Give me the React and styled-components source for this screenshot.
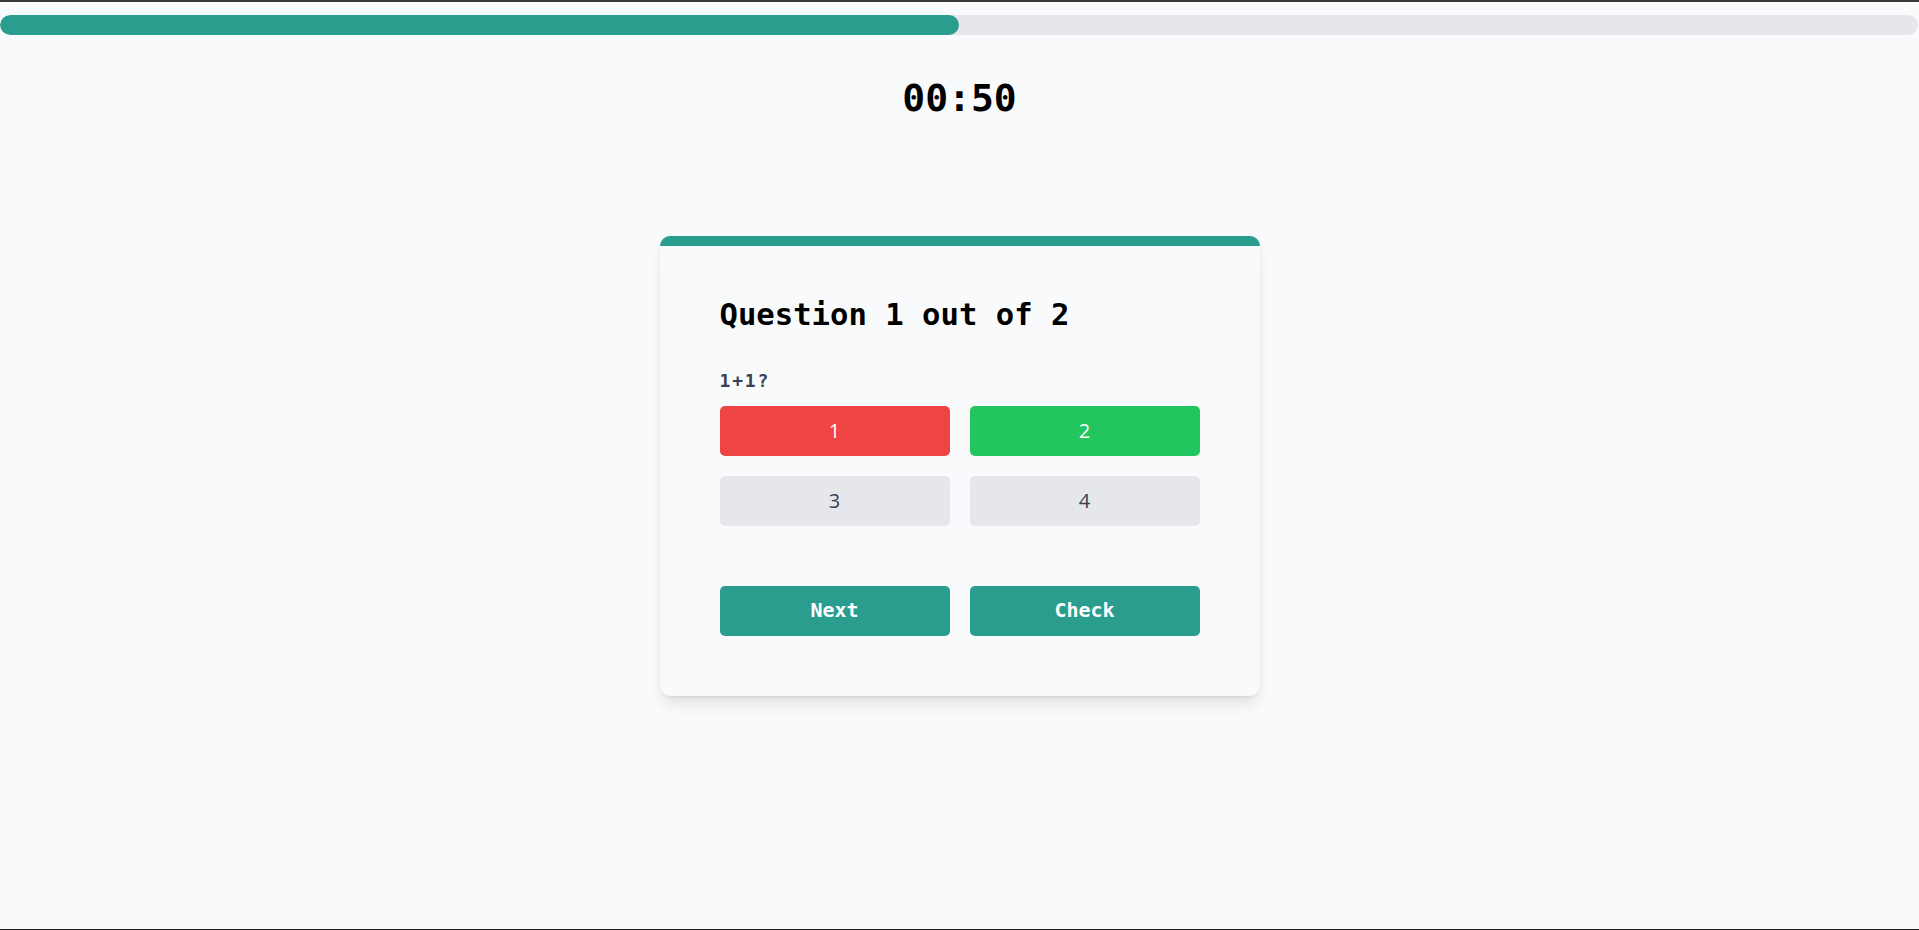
import React from "react";
import styled, { createGlobalStyle } from "styled-components";

const GlobalStyle = createGlobalStyle`
  html, body {
    margin: 0;
    padding: 0;
    background: #f9fafb;
  }
  body {
    font-family: "DejaVu Sans Mono", "Liberation Mono", monospace;
    border-top: 2px solid #3a3a3a;
    border-bottom: 1px solid #1a1a1a;
    min-height: 100vh;
    box-sizing: border-box;
    overflow: hidden;
  }
`;

const questions = [
  { text: "1+1?", answers: ["1", "2", "3", "4"], correct: 1 },
  { text: "2+2?", answers: ["2", "3", "4", "5"], correct: 2 },
];

class App extends React.Component {
  state = { current: 0, picked: 0, checked: true, seconds: 50 };

  render() {
    const q = questions[this.state.current];
    const progress = ((this.state.current + 1) / questions.length) * 100;
    return (
      <Page>
        <GlobalStyle />
        <Track>
          <Fill style={{ width: progress + "%" }} />
        </Track>
        <Timer>00:{String(this.state.seconds).padStart(2, "0")}</Timer>
        <Card>
          <Heading>
            Question {this.state.current + 1} out of {questions.length}
          </Heading>
          <Prompt>{q.text}</Prompt>
          <Options>
            {q.answers.map((a, i) => {
              let status = "idle";
              if (this.state.checked && i === q.correct) status = "right";
              else if (this.state.checked && i === this.state.picked) status = "wrong";
              return (
                <Option key={a} status={status}>
                  {a}
                </Option>
              );
            })}
          </Options>
          <Actions>
            <ActionButton>Next</ActionButton>
            <ActionButton>Check</ActionButton>
          </Actions>
        </Card>
      </Page>
    );
  }
}

export default App;

const Page = styled.div`
  display: flex;
  flex-direction: column;
  align-items: center;
  padding-top: 13px;
`;

const Track = styled.div`
  width: calc(100% - 1px);
  align-self: flex-start;
  height: 20px;
  border-radius: 10px;
  background-color: #e5e7eb;
  overflow: hidden;
`;

const Fill = styled.div`
  height: 100%;
  border-radius: 10px;
  background-color: #2a9d8f;
`;

const Timer = styled.div`
  margin-top: 41px;
  font-size: 38px;
  font-weight: bold;
  line-height: 44px;
  color: #000;
`;

const Card = styled.div`
  margin-top: 116px;
  width: 600px;
  box-sizing: border-box;
  padding: 51px 60px 60px;
  background-color: #f9fafb;
  border-top: 10px solid #2a9d8f;
  border-radius: 10px;
  box-shadow: 0 10px 15px -3px rgba(0, 0, 0, 0.1), 0 4px 6px -4px rgba(0, 0, 0, 0.1),
    0 0 3px rgba(0, 0, 0, 0.04);
`;

const Heading = styled.h2`
  margin: 0;
  font-size: 30.6px;
  line-height: 36px;
  font-weight: bold;
  color: #000;
`;

const Prompt = styled.p`
  margin: 37px 0 14px;
  font-size: 18px;
  line-height: 22px;
  font-weight: bold;
  letter-spacing: 1.8px;
  color: #374151;
`;

const Options = styled.div`
  display: grid;
  grid-template-columns: 1fr 1fr;
  gap: 20px;
`;

const optionColors = {
  right: { bg: "#22c55e", fg: "#ffffff" },
  wrong: { bg: "#ef4444", fg: "#ffffff" },
  idle: { bg: "#e5e7eb", fg: "#374151" },
};

const Option = styled.button`
  height: 50px;
  padding: 0 0 2px;
  border: none;
  border-radius: 5px;
  font-family: "Open Sans", "Noto Sans", sans-serif;
  font-size: 20px;
  background-color: ${props => optionColors[props.status].bg};
  color: ${props => optionColors[props.status].fg};
  cursor: pointer;
`;

const Actions = styled.div`
  margin-top: 60px;
  display: grid;
  grid-template-columns: 1fr 1fr;
  gap: 20px;
`;

const ActionButton = styled.button`
  height: 50px;
  padding: 0 0 2px;
  border: none;
  border-radius: 5px;
  background-color: #2a9d8f;
  color: #ffffff;
  font-family: "DejaVu Sans Mono", monospace;
  font-size: 20px;
  font-weight: bold;
  cursor: pointer;
`;
